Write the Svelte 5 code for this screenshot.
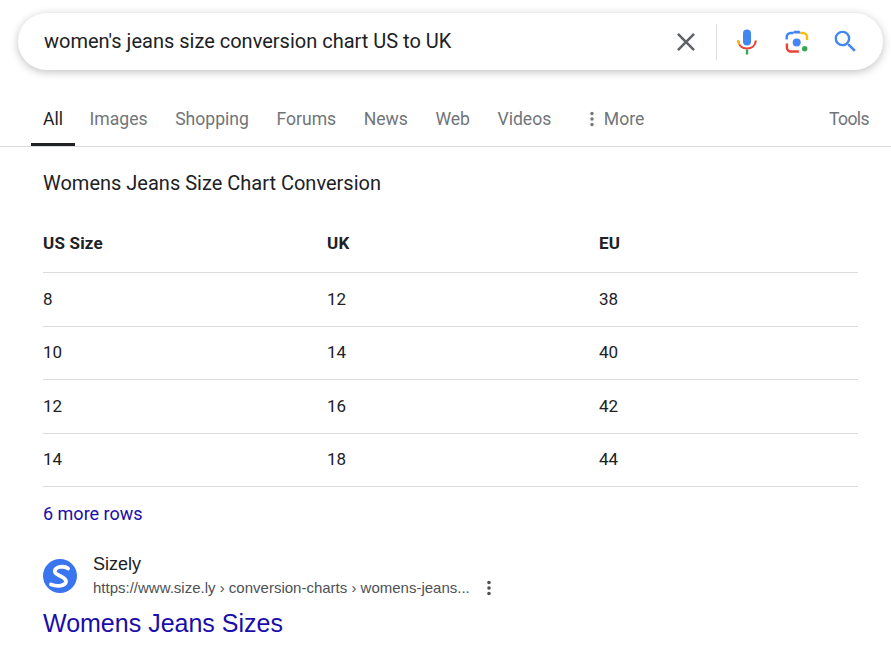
<script lang="ts">
  const tabs = ["Images", "Shopping", "Forums", "News", "Web", "Videos"];
  const rows = [
    ["8", "12", "38"],
    ["10", "14", "40"],
    ["12", "16", "42"],
    ["14", "18", "44"],
  ];
</script>

<div class="page">
  <div class="search-wrap">
    <div class="search">
      <span class="query">women's jeans size conversion chart US to UK</span>
      <svg class="close" width="24" height="24" viewBox="0 0 24 24" aria-hidden="true">
        <path fill="#5f6368" d="M19 6.41 17.59 5 12 10.59 6.41 5 5 6.41 10.59 12 5 17.59 6.41 19 12 13.41 17.59 19 19 17.59 13.41 12z" />
      </svg>
      <span class="divider"></span>
      <svg class="mic" width="24" height="30" viewBox="0 0 24 30" aria-hidden="true">
        <rect x="8" y="2.500" width="8" height="16" rx="4" fill="#4285f4" />
        <path d="M20.800 13.500c-.4 5-4 8-8.800 8s-8.400-3-8.800-8" fill="none" stroke="#ea4335" stroke-width="2.200" />
        <path d="M3.200 13.500c.1 1.500.5 2.800 1.300 4" fill="none" stroke="#fbbc04" stroke-width="2.200" />
        <rect x="10.800" y="22.500" width="2.400" height="5" fill="#34a853" />
      </svg>
      <svg class="lens" width="24" height="24" viewBox="0 0 24 24" aria-hidden="true">
        <path d="M1.700 9.500V7A4 4 0 0 1 5.700 3H8" fill="none" stroke="#4285f4" stroke-width="2.400" />
        <path d="M7.500 3.500 9 .800h5.500L16 3.500z" fill="#4285f4" />
        <path d="M15.500 3h2.500a4 4 0 0 1 4 4v3" fill="none" stroke="#fbbc04" stroke-width="2.400" />
        <path d="M1.900 13.500v4a4 4 0 0 0 4 4h8" fill="none" stroke="#ea4335" stroke-width="2.400" />
        <circle cx="11.700" cy="12.500" r="4" fill="#4285f4" />
        <circle cx="19.700" cy="18.800" r="2.700" fill="#34a853" />
      </svg>
      <svg class="magnifier" width="29" height="29" viewBox="0 0 24 24" aria-hidden="true">
        <path fill="#4285f4" d="M15.500 14h-.79l-.28-.27A6.470 6.470 0 0 0 16 9.500 6.500 6.500 0 1 0 9.500 16c1.610 0 3.090-.59 4.230-1.570l.27.28v.79l5 4.990L20.490 19l-4.990-5zm-6 0C7.010 14 5 11.990 5 9.500S7.010 5 9.500 5 14 7.010 14 9.500 11.990 14 9.500 14z" />
      </svg>
    </div>
  </div>

  <nav class="tabs">
    <span class="tab active">All</span>
    {#each tabs as tab}
      <span class="tab">{tab}</span>
    {/each}
    <span class="tab more">
      <svg width="4" height="16" viewBox="0 0 4 16" aria-hidden="true">
        <circle cx="2" cy="2.500" r="1.700" fill="#70757a" />
        <circle cx="2" cy="8" r="1.700" fill="#70757a" />
        <circle cx="2" cy="13.500" r="1.700" fill="#70757a" />
      </svg>
      More
    </span>
    <span class="tab tools">Tools</span>
  </nav>

  <main class="content">
    <h2>Womens Jeans Size Chart Conversion</h2>
    <table>
      <thead>
        <tr><th>US Size</th><th>UK</th><th>EU</th></tr>
      </thead>
      <tbody>
        {#each rows as row}
          <tr>
            {#each row as cell}
              <td>{cell}</td>
            {/each}
          </tr>
        {/each}
      </tbody>
    </table>
    <a class="more-rows" href="#rows">6 more rows</a>

    <div class="source">
      <svg class="favicon" width="34" height="34" viewBox="0 0 34 34" aria-hidden="true">
        <circle cx="17" cy="17" r="17" fill="#3a75f0" />
        <path d="M25 9.500C21 6.500 12.500 7.500 11.800 12c-.7 4.800 11.700 5.200 11.200 10.500-.5 4.500-8.500 5.500-15 3" fill="none" stroke="#fff" stroke-width="3.800" stroke-linecap="round" />
      </svg>
      <div class="source-text">
        <div class="site">Sizely</div>
        <div class="url-row">
          <span class="url">https://www.size.ly › conversion-charts › womens-jeans...</span>
          <svg width="4" height="16" viewBox="0 0 4 16" aria-hidden="true">
            <circle cx="2" cy="2.500" r="1.800" fill="#4d5156" />
            <circle cx="2" cy="8" r="1.800" fill="#4d5156" />
            <circle cx="2" cy="13.500" r="1.800" fill="#4d5156" />
          </svg>
        </div>
      </div>
    </div>
    <a class="result-title" href="#sizes">Womens Jeans Sizes</a>
  </main>
</div>

<style>
  :global(body) {
    margin: 0;
    background: #fff;
  }

  .page {
    width: 891px;
    height: 646px;
    overflow: hidden;
    font-family: Roboto, "Liberation Sans", sans-serif;
    color: #202124;
  }

  .search-wrap {
    padding: 13px 8px 0 18px;
  }

  .search {
    display: flex;
    align-items: center;
    height: 57px;
    padding: 0 23px 0 26px;
    border-radius: 29px;
    background: #fff;
    box-shadow: 0 2px 8px rgba(32, 33, 36, 0.28);
  }

  .query {
    flex: 1;
    margin-top: -2px;
    font-size: 20px;
    color: #202124;
  }

  .close {
    margin-right: 18px;
    transform: scale(1.280);
  }

  .divider {
    width: 1px;
    height: 36px;
    background: #dadce0;
    margin-right: 18px;
  }

  .mic {
    margin-right: 26px;
  }

  .lens {
    margin-right: 22px;
  }

  .tabs {
    display: flex;
    align-items: center;
    height: 76px;
    padding: 0 22px 0 31px;
    border-bottom: 1px solid #dadce0;
  }

  .tab {
    display: flex;
    align-items: center;
    height: 100%;
    box-sizing: border-box;
    padding-top: 25px;
    border-bottom: 3px solid transparent;
    margin-right: 27.500px;
    font-size: 17.600px;
    color: #70757a;
  }

  .tab.active {
    padding: 25px 11.500px 0 12px;
    margin-right: 15px;
    color: #202124;
    border-bottom-color: #202124;
  }

  .tab.more {
    gap: 10px;
    margin-left: 11px;
  }

  .tab.tools {
    margin: 0 0 0 auto;
    letter-spacing: -0.6px;
  }

  .content {
    padding: 23px 33px 0 43px;
  }

  h2 {
    margin: 0;
    font-size: 20px;
    font-weight: 400;
    line-height: 26px;
    color: #202124;
  }

  table {
    width: 100%;
    margin-top: 20px;
    border-collapse: collapse;
    table-layout: fixed;
    font-size: 17px;
  }

  th,
  td {
    padding: 0;
    text-align: left;
    border-bottom: 1px solid #dadce0;
    box-sizing: border-box;
  }

  th:nth-child(1),
  td:nth-child(1) {
    width: 284px;
  }

  th:nth-child(2),
  td:nth-child(2) {
    width: 272px;
  }

  th {
    height: 56px;
    padding-bottom: 2px;
    font-weight: 700;
    letter-spacing: 0.2px;
  }

  td {
    height: 53px;
    padding-bottom: 1px;
    color: #202124;
  }

  tbody tr:nth-child(odd) td {
    height: 54px;
  }

  .more-rows {
    display: block;
    margin-top: 16px;
    font-size: 18px;
    line-height: 22px;
    color: #1a0dab;
    text-decoration: none;
  }

  .source {
    display: flex;
    align-items: center;
    gap: 16px;
    margin-top: 28px;
  }

  .favicon {
    flex: none;
    margin-top: 2px;
  }

  .site {
    font-family: "Liberation Sans", Arial, sans-serif;
    font-size: 18px;
    line-height: 22px;
    color: #202124;
  }

  .url-row {
    display: flex;
    align-items: center;
    gap: 17px;
    margin-top: 3px;
  }

  .url {
    font-family: "Liberation Sans", Arial, sans-serif;
    font-size: 15px;
    line-height: 20px;
    color: #4d5156;
  }

  .result-title {
    display: block;
    margin-top: 9px;
    font-family: "Liberation Sans", Arial, sans-serif;
    font-size: 25px;
    line-height: 32px;
    color: #1a0dab;
    text-decoration: none;
  }
</style>
